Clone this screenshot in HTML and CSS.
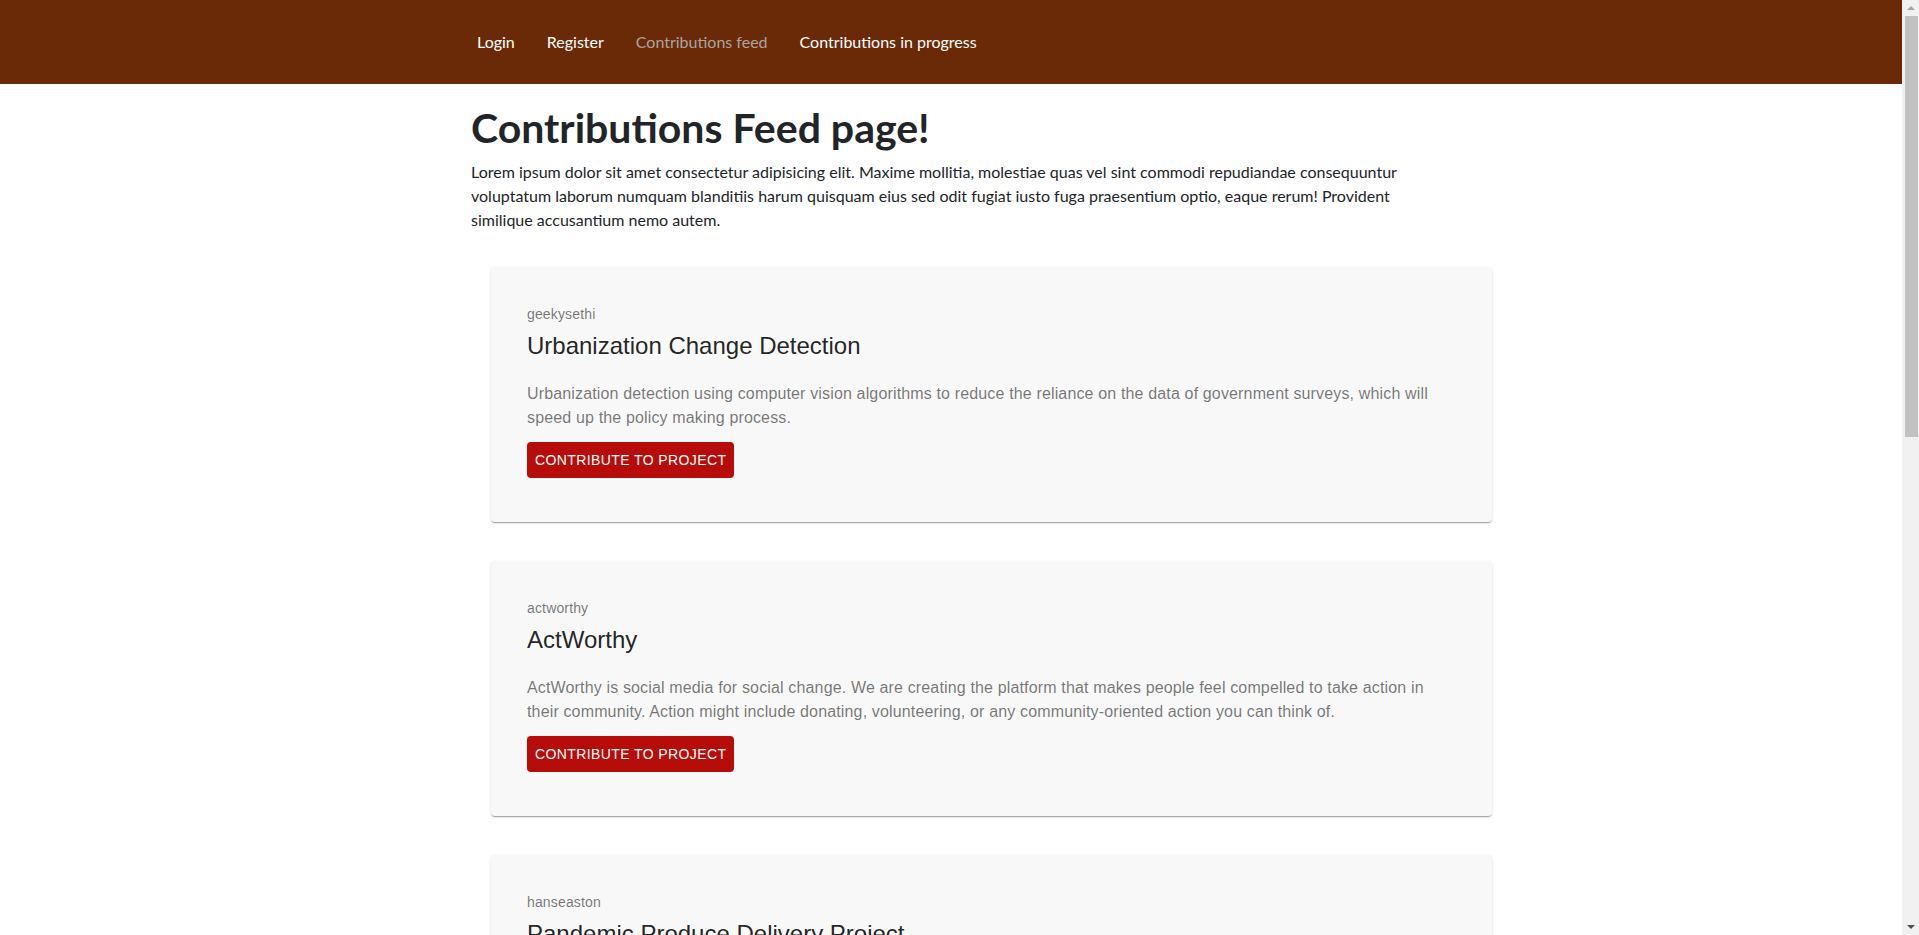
FILE: index.html
```html
<!DOCTYPE html>
<html lang="en">
<head>
<meta charset="utf-8">
<title>Contributions Feed</title>
<link rel="stylesheet" href="styles.css">
</head>
<body>
<nav class="navbar">
  <div class="container nav-inner">
    <a class="nav-link" href="#">Login</a>
    <a class="nav-link" href="#">Register</a>
    <a class="nav-link muted" href="#">Contributions feed</a>
    <a class="nav-link" href="#">Contributions in progress</a>
  </div>
</nav>
<main class="container">
  <h1 class="page-title">Contributions Feed page!</h1>
  <p class="lead-text">Lorem ipsum dolor sit amet consectetur adipisicing elit. Maxime mollitia, molestiae quas vel sint commodi repudiandae consequuntur voluptatum laborum numquam blanditiis harum quisquam eius sed odit fugiat iusto fuga praesentium optio, eaque rerum! Provident similique accusantium nemo autem.</p>
  <div class="feed">
    <div class="card">
      <div class="owner">geekysethi</div>
      <div class="title">Urbanization Change Detection</div>
      <p class="desc">Urbanization detection using computer vision algorithms to reduce the reliance on the data of government surveys, which will speed up the policy making process.</p>
      <button class="btn">Contribute to project</button>
    </div>
    <div class="card">
      <div class="owner">actworthy</div>
      <div class="title">ActWorthy</div>
      <p class="desc">ActWorthy is social media for social change. We are creating the platform that makes people feel compelled to take action in their community. Action might include donating, volunteering, or any community-oriented action you can think of.</p>
      <button class="btn">Contribute to project</button>
    </div>
    <div class="card">
      <div class="owner">hanseaston</div>
      <div class="title">Pandemic Produce Delivery Project</div>
      <p class="desc">Connecting local farms with families in need by organizing volunteer drivers to deliver fresh produce safely during the pandemic.</p>
      <button class="btn">Contribute to project</button>
    </div>
  </div>
</main>
<div class="scrollbar" aria-hidden="true">
  <span class="arrow up"></span>
  <span class="thumb"></span>
  <span class="arrow down"></span>
</div>
</body>
</html>
```
FILE: styles.css
```css
html, body {
  margin: 0;
  padding: 0;
}
body {
  margin-right: 17px;
  font-family: Lato, "Noto Sans", sans-serif;
  font-size: 16px;
  line-height: 1.5;
  color: #212529;
  background: #fff;
}
.container {
  width: 960px;
  margin: 0 auto;
}
.navbar {
  background: #6a2a07;
  height: 84px;
  display: flex;
  align-items: center;
}
.nav-inner {
  display: flex;
  align-items: center;
  gap: 32px;
  padding-left: 6px;
  box-sizing: border-box;
}
.nav-link {
  color: #fff;
  text-decoration: none;
  font-size: 16px;
  line-height: 24px;
}
.nav-link.muted {
  color: #aaa4a0;
}
.page-title {
  font-size: 41px;
  font-weight: 700;
  line-height: 1.2;
  margin: 19px 0 8px;
  color: #212529;
}
.lead-text {
  margin: 0 0 16px;
}
.feed {
  padding: 19px 0 0 20px;
}
.card {
  width: 1001px;
  box-sizing: border-box;
  background: #f8f8f8;
  border-radius: 4px;
  padding: 37px 36px 44px;
  margin-bottom: 39px;
  box-shadow: 0 2px 1px -1px rgba(0,0,0,0.2), 0 1px 1px 0 rgba(0,0,0,0.14), 0 1px 3px 0 rgba(0,0,0,0.12);
  font-family: "Liberation Sans", Arial, sans-serif;
}
.owner {
  font-size: 14px;
  line-height: 20px;
  letter-spacing: 0.15px;
  color: rgba(0,0,0,0.54);
  margin-bottom: 6px;
}
.title {
  font-size: 24px;
  line-height: 32px;
  color: rgba(0,0,0,0.87);
}
.desc {
  font-size: 16px;
  line-height: 24px;
  letter-spacing: 0.15px;
  color: rgba(0,0,0,0.54);
  margin: 20px 0 12px;
}
.btn {
  display: block;
  height: 36px;
  padding: 0 8px;
  border: 0;
  border-radius: 4px;
  background: #b60c0a;
  color: #fff;
  font-family: "Liberation Sans", Arial, sans-serif;
  font-size: 14px;
  letter-spacing: 0.4px;
  text-transform: uppercase;
  cursor: pointer;
}
.scrollbar {
  position: fixed;
  top: 0;
  right: 0;
  width: 17px;
  height: 100vh;
  background: #f1f1f1;
  display: flex;
  flex-direction: column;
  align-items: center;
}
.arrow {
  width: 0;
  height: 0;
  border-left: 4px solid transparent;
  border-right: 4px solid transparent;
}
.arrow.up {
  margin-top: 6px;
  border-bottom: 4px solid #a3a3a3;
}
.arrow.down {
  margin-top: auto;
  margin-bottom: 6px;
  border-top: 4px solid #505050;
}
.thumb {
  display: block;
  width: 13px;
  height: 421px;
  margin-top: 6px;
  margin-left: 2px;
  background: #c1c1c1;
}
```
